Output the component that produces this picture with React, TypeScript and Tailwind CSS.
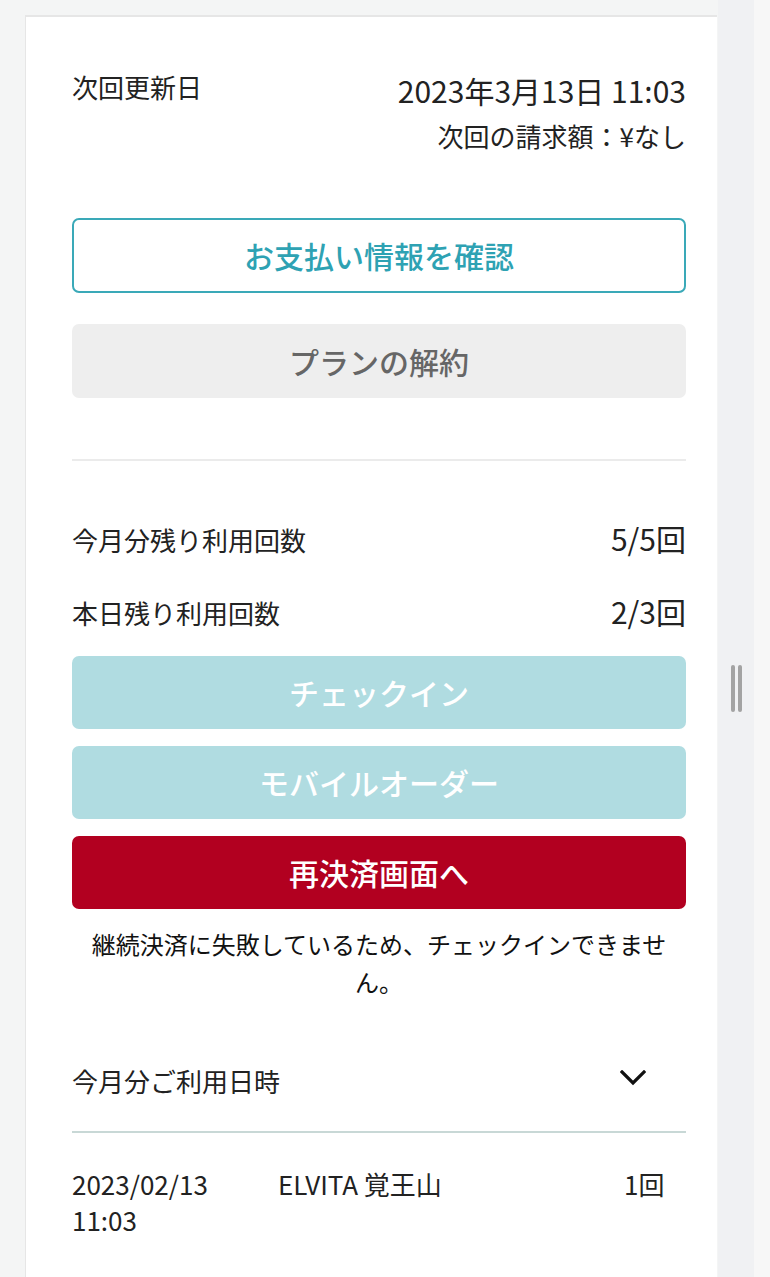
import React from 'react';

const font = {fontFamily: '"Noto Sans CJK JP", "Noto Sans", sans-serif'};

function Chevron() {
    return (
        <svg width="26" height="16" viewBox="0 0 26 16" fill="none">
            <path d="M2 2 L13 13 L24 2" stroke="#111" strokeWidth="3.2" strokeLinecap="square"/>
        </svg>
    );
}

function ActionButton({label, className}: { label: string, className: string }) {
    return (
        <button
            type="button"
            className={"w-full h-[73px] rounded-[7px] flex items-center justify-center text-[30px] font-medium " + className}>
            {label}
        </button>
    );
}

export default function App() {
    return (
        <div className="min-h-[1277px] bg-[#f4f5f5] flex items-start overflow-hidden" style={font}>
            <div
                className="ml-[25px] mt-[15px] w-[692px] h-[1262px] bg-white border-t-2 border-l border-[#e6e6e6] pl-[46px] pr-[31px] pt-[50px] text-[#222]">
                {/* renewal */}
                <div className="flex justify-between items-start">
                    <p className="text-[26px] leading-[40px]">次回更新日</p>
                    <div className="flex flex-col items-end">
                        <p className="text-[30px] leading-[46px]">2023年3月13日 11:03</p>
                        <p className="mt-[3px] text-[26px] leading-[40px]">次回の請求額：¥なし</p>
                    </div>
                </div>

                <button
                    type="button"
                    className="mt-[62px] w-full h-[75px] rounded-[7px] border-2 border-[#3aa9b8] text-[#2ea2b3] text-[30px] font-medium flex items-center justify-center">
                    お支払い情報を確認
                </button>
                <button
                    type="button"
                    className="mt-[31px] w-full h-[74px] rounded-[7px] bg-[#eeeeee] text-[#666] text-[30px] font-medium flex items-center justify-center">
                    プランの解約
                </button>

                <div className="mt-[61px] h-[2px] bg-[#ebebeb]"/>

                {/* remaining counts */}
                <div className="mt-[55px] flex justify-between items-baseline h-[48px]">
                    <p className="text-[26px]">今月分残り利用回数</p>
                    <p className="text-[30px]">5/5回</p>
                </div>
                <div className="mt-[25px] flex justify-between items-baseline h-[48px]">
                    <p className="text-[26px]">本日残り利用回数</p>
                    <p className="text-[30px]">2/3回</p>
                </div>

                <div className="mt-[19px] flex flex-col gap-[17px]">
                    <ActionButton label="チェックイン" className="bg-[#b0dce1] text-white"/>
                    <ActionButton label="モバイルオーダー" className="bg-[#b0dce1] text-white"/>
                    <ActionButton label="再決済画面へ" className="bg-[#b20020] text-white"/>
                </div>

                <p className="mt-[16px] text-center text-[24px] leading-[38px] text-[#111]">
                    継続決済に失敗しているため、チェックインできませ<br/>ん。
                </p>

                {/* usage history */}
                <div className="mt-[59px] flex justify-between items-center h-[40px]">
                    <p className="text-[26px]">今月分ご利用日時</p>
                    <div className="mr-[40px] -mt-[4px]"><Chevron/></div>
                </div>
                <div className="mt-[31px] h-[2px] bg-[#c8d8d6]"/>

                <div className="mt-[33px] flex text-[26px] leading-[36px]">
                    <div className="w-[206px]">
                        <p>2023/02/13</p>
                        <p>11:03</p>
                    </div>
                    <p className="w-[346px]">ELVITA 覚王山</p>
                    <p>1回</p>
                </div>
            </div>
            <div className="ml-[1px] w-[36px] h-[1277px] bg-[#f0f1f3] flex items-start justify-center pt-[665px] gap-[3px]">
                <div className="w-[4px] h-[47px] rounded-full bg-[#a3a3a3]"/>
                <div className="w-[4px] h-[47px] rounded-full bg-[#a3a3a3]"/>
            </div>
            <div className="flex-1 h-[1277px] bg-[#f7f7f7]"/>
        </div>
    );
}
